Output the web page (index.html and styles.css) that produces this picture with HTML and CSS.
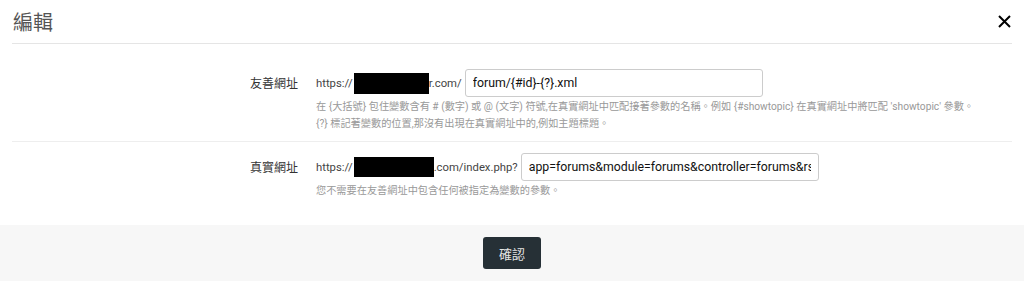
FILE: index.html
```html
<!DOCTYPE html>
<html lang="zh-Hant">
<head>
    <meta charset="UTF-8">
    <meta name="viewport" content="width=device-width, initial-scale=1.0">
    <title>編輯</title>
    <link rel="stylesheet" href="styles.css">
</head>
<body>
    <div class="modal">
        <div class="modal-header">
            <h3 class="modal-title">編輯</h3>
            <button class="close-btn" type="button" aria-label="關閉">
                <svg width="13" height="13" viewBox="0 0 13 13">
                    <path d="M1 1 L12 12 M12 1 L1 12" stroke="#000" stroke-width="2" fill="none"/>
                </svg>
            </button>
        </div>

        <form class="modal-body">
            <div class="form-row">
                <label class="row-label" for="friendlyUrl">友善網址</label>
                <div class="row-field">
                    <div class="url-line">
                        <span class="url-prefix">https://<span class="redacted redacted-short"></span>r.com/</span>
                        <input type="text" id="friendlyUrl" class="url-input" value="forum/{#id}-{?}.xml">
                    </div>
                    <p class="help-text">在 {大括號} 包住變數含有 # (數字) 或 @ (文字) 符號,在真實網址中匹配接著參數的名稱。例如 {#showtopic} 在真實網址中將匹配 'showtopic' 參數。<br>{?} 標記著變數的位置,那沒有出現在真實網址中的,例如主題標題。</p>
                </div>
            </div>

            <div class="form-row">
                <label class="row-label" for="realUrl">真實網址</label>
                <div class="row-field">
                    <div class="url-line">
                        <span class="url-prefix">https://<span class="redacted"></span>.com/index.php?</span>
                        <input type="text" id="realUrl" class="url-input" value="app=forums&amp;module=forums&amp;controller=forums&amp;rss=1&amp;id={#id}">
                    </div>
                    <p class="help-text">您不需要在友善網址中包含任何被指定為變數的參數。</p>
                </div>
            </div>
        </form>

        <div class="modal-footer">
            <button type="submit" class="btn-primary">確認</button>
        </div>
    </div>
</body>
</html>
```

FILE: styles.css
```css
body {
    margin: 0;
    background: #fff;
    font-family: Roboto, "Noto Sans CJK TC", sans-serif;
    color: #333;
    overflow: hidden;
}
.modal {
    background: #fff;
}
.modal-header {
    margin: 0 12px;
    height: 43px;
    border-bottom: 1px solid #e5e5e5;
    display: flex;
    align-items: center;
    justify-content: space-between;
}
.modal-title {
    margin: 0;
    font-size: 20px;
    font-weight: normal;
    color: #555;
    font-family: "Noto Sans CJK TC", sans-serif;
    padding-left: 1px;
}
.close-btn {
    background: none;
    border: none;
    padding: 0;
    width: 13px;
    height: 13px;
    margin-right: 1px;
    cursor: pointer;
    display: flex;
}
.modal-body {
    margin: 0;
}
.form-row {
    margin: 0 12px;
    padding: 25px 0 9px;
    border-bottom: 1px solid #eee;
    display: flex;
    align-items: flex-start;
}
.form-row + .form-row {
    padding-top: 11px;
    padding-bottom: 26px;
    border-bottom: none;
}
.row-label {
    width: 286px;
    margin-right: 18px;
    text-align: right;
    font-size: 12px;
    line-height: 28px;
    color: #333;
    font-family: "Noto Sans CJK TC", sans-serif;
}
.row-field {
    flex: 1;
}
.url-line {
    display: flex;
    align-items: center;
}
.url-prefix {
    font-size: 11.3px;
    color: #444;
    display: flex;
    align-items: center;
    margin-right: 3px;
}
.redacted {
    display: inline-block;
    width: 80px;
    height: 20px;
    background: #000;
    margin-left: 1px;
}
.redacted-short {
    width: 75px;
    height: 21px;
}
.url-input {
    width: 298px;
    height: 28px;
    box-sizing: border-box;
    border: 1px solid #ccc;
    border-radius: 3px;
    padding: 0 7px;
    font-family: Roboto, sans-serif;
    font-size: 12.3px;
    color: #111;
    outline: none;
}
.help-text {
    margin: 1px 0 0;
    font-size: 10.2px;
    line-height: 17px;
    color: #999;
    font-family: Roboto, "Noto Sans CJK TC", sans-serif;
}
.modal-footer {
    background: #f7f7f7;
    padding: 12px;
    height: 60px;
    display: flex;
    justify-content: center;
    align-items: flex-start;
}
.btn-primary {
    width: 58px;
    height: 32px;
    background: #263036;
    color: #e4e4e4;
    border: none;
    border-radius: 3px;
    font-size: 13px;
    font-family: "Noto Sans CJK TC", sans-serif;
    cursor: pointer;
}
```
